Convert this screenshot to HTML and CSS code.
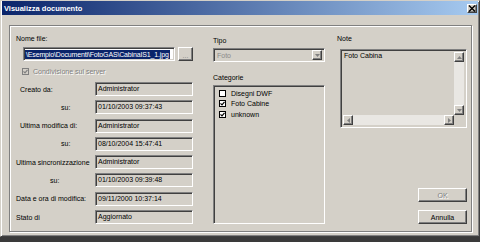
FILE: index.html
```html
<!DOCTYPE html>
<html lang="it">
<head>
  <meta charset="UTF-8" />
  <title>Visualizza documento</title>
  <link rel="stylesheet" href="styles.css">
</head>
<body>
  <div class="window">
    <div class="titlebar">
      <span class="title">Visualizza documento</span>
      <span class="close-btn">
        <svg width="8" height="7" viewBox="0 0 8 7"><path d="M1 0.5 L7 6.5 M7 0.5 L1 6.5" stroke="#000" stroke-width="1.4"/></svg>
      </span>
    </div>

    <div class="client">
      <div class="group">

        <div class="col-left">
          <div class="caption">Nome file:</div>
          <div class="file-row">
            <div class="field file-field"><span class="selected">\Esempio\Documenti\FotoGAS\CabinaIS1_1.jpg</span></div>
            <div class="btn browse">...</div>
          </div>
          <div class="check-row disabled">
            <span class="checkbox checked">
              <svg width="5" height="5" viewBox="0 0 5 5"><path d="M0.5 2.3 L2 3.8 L4.5 0.8" fill="none" stroke="#808080" stroke-width="1.2"/></svg>
            </span>
            Condivisione sul server
          </div>
          <div class="info">
            <div class="info-row"><span class="label l1">Creato da:</span><div class="field">Administrator</div></div>
            <div class="info-row"><span class="label su1">su:</span><div class="field">01/10/2003 09:37:43</div></div>
            <div class="info-row"><span class="label l1">Ultima modifica di:</span><div class="field">Administrator</div></div>
            <div class="info-row"><span class="label su1">su:</span><div class="field">08/10/2004 15:47:41</div></div>
            <div class="info-row"><span class="label">Ultima sincronizzazione</span><div class="field">Administrator</div></div>
            <div class="info-row"><span class="label su2">su:</span><div class="field">01/10/2003 09:39:48</div></div>
            <div class="info-row"><span class="label">Data e ora di modifica:</span><div class="field">09/11/2000 10:37:14</div></div>
            <div class="info-row"><span class="label low">Stato di</span><div class="field">Aggiornato</div></div>
          </div>
        </div>

        <div class="col-mid">
          <div class="caption tipo">Tipo</div>
          <div class="field combo">
            <span class="combo-text">Foto</span>
            <span class="btn combo-btn">
              <svg width="5" height="3" viewBox="0 0 5 3"><path d="M0 0 H5 L2.5 3 Z" fill="#808080"/></svg>
            </span>
          </div>
          <div class="caption categorie">Categorie</div>
          <div class="field listbox">
            <div class="list-item"><span class="checkbox"></span>Disegni DWF</div>
            <div class="list-item">
              <span class="checkbox checked">
                <svg width="5" height="5" viewBox="0 0 5 5"><path d="M0.5 2.3 L2 3.8 L4.5 0.8" fill="none" stroke="#000" stroke-width="1.2"/></svg>
              </span>Foto Cabine
            </div>
            <div class="list-item">
              <span class="checkbox checked">
                <svg width="5" height="5" viewBox="0 0 5 5"><path d="M0.5 2.3 L2 3.8 L4.5 0.8" fill="none" stroke="#000" stroke-width="1.2"/></svg>
              </span>unknown
            </div>
          </div>
        </div>

        <div class="col-right">
          <div class="caption">Note</div>
          <div class="field notebox">
            <div class="note-text">Foto Cabina</div>
            <div class="vscroll">
              <span class="btn arrow"><svg width="5" height="3" viewBox="0 0 5 3"><path d="M0 3 H5 L2.5 0 Z" fill="#808080"/></svg></span>
              <span class="btn arrow"><svg width="5" height="3" viewBox="0 0 5 3"><path d="M0 0 H5 L2.5 3 Z" fill="#808080"/></svg></span>
            </div>
            <div class="hscroll">
              <span class="btn arrow"><svg width="3" height="5" viewBox="0 0 3 5"><path d="M3 0 V5 L0 2.5 Z" fill="#808080"/></svg></span>
              <span class="btn arrow"><svg width="3" height="5" viewBox="0 0 3 5"><path d="M0 0 V5 L3 2.5 Z" fill="#808080"/></svg></span>
            </div>
            <div class="corner"></div>
          </div>
          <div class="buttons">
            <div class="btn push disabled-text">OK</div>
            <div class="btn push">Annulla</div>
          </div>
        </div>

      </div>
    </div>
  </div>
</body>
</html>
```

FILE: styles.css
```css
body {
  margin: 0;
  background: #3a3a3a;
  font-family: "Liberation Sans", Arial, sans-serif;
  font-size: 7px;
  color: #000;
}
.window {
  width: 480px;
  height: 237px;
  box-sizing: border-box;
  background: #d4d0c8;
  border: 1px solid;
  border-color: #d4d0c8 #404040 #404040 #d4d0c8;
  box-shadow: inset 1px 1px 0 #fff, inset -1px -1px 0 #808080;
  padding: 0 1px 1px 1px;
  display: flex;
  flex-direction: column;
}
.titlebar {
  height: 14px;
  flex-shrink: 0;
  background: linear-gradient(to right, #0a246a, #a6caf0);
  display: flex;
  align-items: center;
  justify-content: space-between;
  padding: 0 1px;
}
.title {
  color: #fff;
  font-weight: bold;
  font-size: 7.5px;
  padding-left: 1px;
}
.close-btn {
  width: 10px;
  height: 9px;
  box-sizing: border-box;
  background: #d4d0c8;
  border: 1px solid;
  border-color: #fff #404040 #404040 #fff;
  box-shadow: inset -1px -1px 0 #808080;
  display: flex;
  align-items: center;
  justify-content: center;
}
.client {
  flex: 1;
  padding: 10px 6px 3px 7px;
  display: flex;
}
.group {
  flex: 1;
  display: flex;
  border: 1px solid #808080;
  box-shadow: inset 1px 1px 0 #fff, 1px 1px 0 #fff;
  padding: 8px 4px 7px 6px;
}
.caption {
  height: 9px;
  line-height: 9px;
  white-space: nowrap;
}

/* sunken edit boxes */
.field {
  box-sizing: border-box;
  border: 1px solid;
  border-color: #808080 #fff #fff #808080;
  box-shadow: inset 1px 1px 0 #404040, inset -1px -1px 0 #d4d0c8;
  background: #d4d0c8;
  white-space: nowrap;
  overflow: hidden;
}
/* raised buttons */
.btn {
  box-sizing: border-box;
  background: #d4d0c8;
  border: 1px solid;
  border-color: #fff #404040 #404040 #fff;
  box-shadow: inset -1px -1px 0 #808080;
  display: flex;
  align-items: center;
  justify-content: center;
}

.col-left {
  width: 177px;
  display: flex;
  flex-direction: column;
}
.file-row {
  margin-top: 4px;
  height: 14px;
  display: flex;
  gap: 3px;
  padding-left: 7px;
}
.file-field {
  width: 152px;
  background: #fff;
  padding: 2px 0 0 1px;
}
.selected {
  display: inline-block;
  background: #0a246a;
  color: #fff;
  line-height: 9px;
  padding: 0 1px;
  letter-spacing: -0.15px;
}
.browse {
  flex: 1;
  color: #808080;
  align-items: flex-end;
  line-height: 9px;
}
.check-row {
  margin-top: 6px;
  height: 9px;
  padding-left: 6px;
  display: flex;
  align-items: center;
  gap: 4px;
}
.disabled, .disabled-text {
  color: #808080;
  text-shadow: 1px 1px 0 #fff;
}
.checkbox {
  width: 7px;
  height: 7px;
  box-sizing: border-box;
  border: 1px solid #000;
  background: #fff;
  display: flex;
  align-items: center;
  justify-content: center;
}
.check-row .checkbox {
  border-color: #808080;
  background: #d4d0c8;
}
.info {
  flex: 1;
  margin-top: 6px;
  display: flex;
  flex-direction: column;
  justify-content: space-between;
}
.info-row {
  display: flex;
  align-items: center;
  height: 14px;
}
.label {
  width: 79px;
  box-sizing: border-box;
  white-space: nowrap;
}
.l1 { padding-left: 4px; }
.su1 { padding-left: 45px; }
.su2 { padding-left: 34px; }
.low { padding-top: 2px; }
.info-row .field {
  flex: 1;
  height: 14px;
  line-height: 11px;
  padding-left: 2px;
}

.col-mid {
  width: 112px;
  margin-left: 20px;
  display: flex;
  flex-direction: column;
}
.tipo { margin-top: 2px; }
.combo {
  margin-top: 3px;
  height: 14px;
  display: flex;
  align-items: center;
  padding: 2px;
}
.combo-text {
  flex: 1;
  padding-left: 1px;
  color: #8a8a8a;
}
.combo-btn {
  width: 10px;
  height: 10px;
}
.categorie { margin-top: 11px; }
.listbox {
  flex: 1;
  margin-top: 3px;
  padding: 2px 0 0 5px;
}
.list-item {
  height: 10.5px;
  display: flex;
  align-items: center;
  gap: 5px;
}

.col-right {
  width: 130px;
  margin-left: 12px;
  display: flex;
  flex-direction: column;
}
.notebox {
  margin: 6px 0 0 3px;
  height: 79px;
  padding: 2px;
  display: grid;
  grid-template-columns: 1fr 10px;
  grid-template-rows: 1fr 10px;
}
.note-text {
  line-height: 8px;
  padding-left: 1px;
}
.vscroll, .hscroll {
  background: #e9e7e3;
  display: flex;
  justify-content: space-between;
}
.vscroll { flex-direction: column; }
.arrow {
  width: 10px;
  height: 10px;
}
.corner { background: #d4d0c8; }
.buttons {
  margin-top: auto;
  display: flex;
  flex-direction: column;
  align-items: flex-end;
  gap: 8px;
}
.push {
  width: 49px;
  height: 14px;
}
```
